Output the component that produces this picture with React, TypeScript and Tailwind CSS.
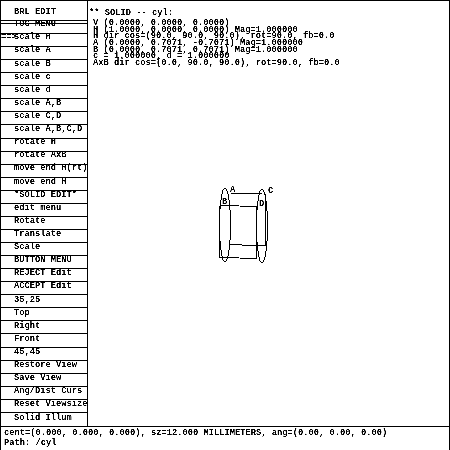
const rows = [
  "scale H", "scale A", "scale B", "scale c", "scale d", "scale A,B", "scale C,D", "scale A,B,C,D",
  "rotate H", "rotate AxB", "move end H(rt)", "move end H", "*SOLID EDIT*", "edit menu", "Rotate", "Translate", "Scale",
  "BUTTON MENU", "REJECT Edit", "ACCEPT Edit", "35,25", "Top", "Right", "Front", "45,45", "Restore View", "Save View",
  "Ang/Dist Curs", "Reset Viewsize", "Solid Illum",
];

const info = [
  "V (0.0000, 0.0000, 0.0000)",
  "H (1.0000, 0.0000, 0.0000) Mag=1.000000",
  "H dir cos=(90.0, 90.0, 90.0), rot=90.0, fb=0.0",
  "A (0.0000, 0.7071, -0.7071) Mag=1.000000",
  "B (0.0000, 0.7071, 0.7071) Mag=1.000000",
  "c = 1.000000, d = 1.000000",
  "AxB dir cos=(0.0, 90.0, 90.0), rot=90.0, fb=0.0",
];

function Label({ x, y, t }: { x: number; y: number; t: string }) {
  return (
    <text x={x} y={y} fontSize="8.75" fontWeight="700" fill="#000" stroke="none" fontFamily="'Liberation Mono', monospace">
      {t}
    </text>
  );
}

function Viewport() {
  return (
    <svg width="90" height="100" viewBox="0 0 90 100" className="absolute left-[199px] top-[169px]" fill="none" stroke="#000" strokeWidth="1" shapeRendering="crispEdges">
      <ellipse cx="25" cy="55" rx="5.5" ry="37" />
      <ellipse cx="62" cy="56" rx="5.5" ry="37" />
      <path d="M30.5 23.5H62M20.5 35.5L57.5 36.5M56.5 36.5V89M19.5 35.5V88M20.5 87.5L57.5 88.5M30.5 74.5L65.5 76M65.5 24V76" />
      <Label x={30} y={22} t="A" />
      <Label x={68} y={23} t="C" />
      <Label x={22} y={34} t="B" />
      <Label x={59} y={36} t="D" />
    </svg>
  );
}

export default function App() {
  return (
    <div className="relative flex h-[450px] w-[450px] flex-col overflow-hidden border-t border-r border-l border-black bg-white font-['Liberation_Mono',monospace] text-[8.75px] leading-[7px] font-bold whitespace-pre text-black contrast-[3]">
      <div className="flex h-[426px] min-h-0 shrink-0 border-b border-black">
        <div className="flex h-full w-[87px] shrink-0 flex-col border-r border-black">
          <div className="flex h-[20px] shrink-0 items-center border-b border-black pt-[3px] pl-[13px]">BRL EDIT</div>
          <div className="mt-[2px] flex h-[11px] shrink-0 items-center border-y border-black pb-[8px] pl-[13px]">TOC MENU</div>
          {rows.map((r, i) => (
            <div
              key={r}
              className={`relative flex h-[13.07px] shrink-0 items-center pl-[13px] ${i === rows.length - 1 ? "" : "border-b border-black"}`}
              style={{ paddingBottom: 4.4 - (2.8 * i) / 29 }}
            >
              {i === 0 && <span className="absolute left-0">==&gt;</span>}
              {r}
            </div>
          ))}
        </div>
        <div className="flex-1 pl-[1px] pt-[9px]">
          <div>** SOLID -- cyl:</div>
          <div className="mt-[3px] pl-[4px]">
            {info.map((l) => (
              <div key={l} className="h-[6.67px]">{l}</div>
            ))}
          </div>
        </div>
      </div>
      <div className="flex-1 pl-[3px] pt-[3px]">
        <div className="h-[10px]">cent=(0.000, 0.000, 0.000), sz=12.000 MILLIMETERS, ang=(0.00, 0.00, 0.00)</div>
        <div>Path: /cyl</div>
      </div>
      <Viewport />
    </div>
  );
}
